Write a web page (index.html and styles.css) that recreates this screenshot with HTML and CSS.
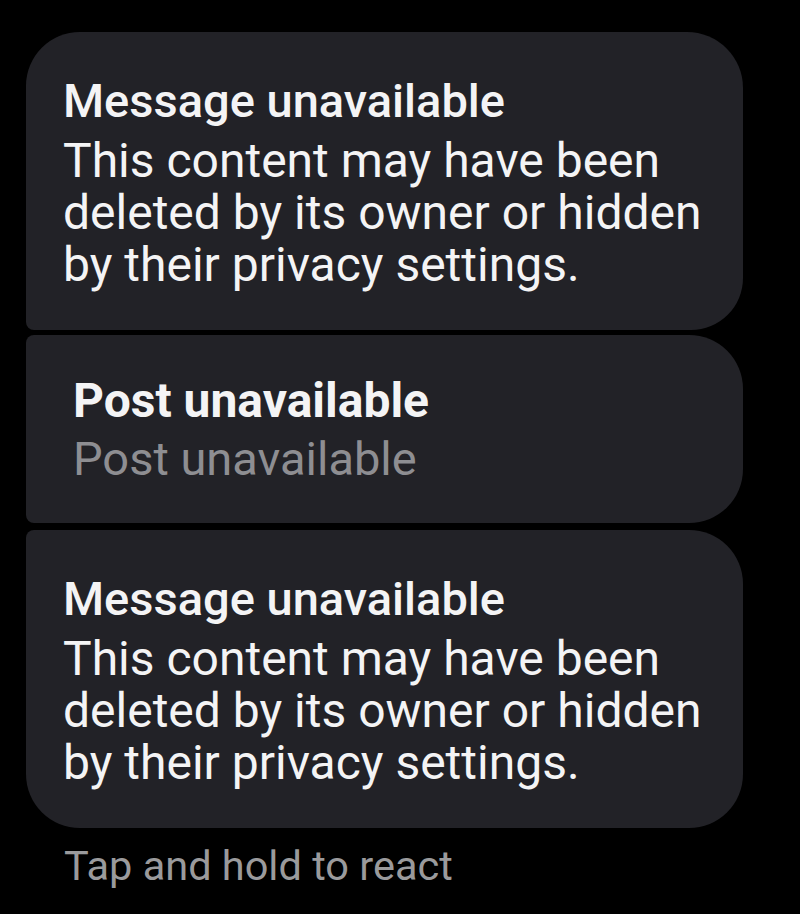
FILE: index.html
```html
<!DOCTYPE html>
<html lang="en">
<head>
<meta charset="utf-8">
<title>Messages</title>
<link rel="stylesheet" href="styles.css">
</head>
<body>
<main class="thread">
  <div class="group">
    <div class="bubble bubble-first">
      <div class="bubble-title">Message unavailable</div>
      <div class="bubble-text">This content may have been deleted by its owner or hidden by their privacy settings.</div>
    </div>
    <div class="bubble bubble-middle bubble-post">
      <div class="bubble-title bubble-title-bold">Post unavailable</div>
      <div class="bubble-text bubble-text-muted">Post unavailable</div>
    </div>
    <div class="bubble bubble-last">
      <div class="bubble-title">Message unavailable</div>
      <div class="bubble-text">This content may have been deleted by its owner or hidden by their privacy settings.</div>
    </div>
  </div>
  <div class="hint">Tap and hold to react</div>
</main>
</body>
</html>
```

FILE: styles.css
```css
html, body {
  margin: 0;
  padding: 0;
  background: #000000;
}

body {
  font-family: Roboto, "Noto Sans", "Liberation Sans", sans-serif;
  color: #f4f4f5;
  width: 800px;
  height: 914px;
  overflow: hidden;
}

.thread {
  padding: 32px 0 0 26px;
}

.group {
  display: flex;
  flex-direction: column;
  gap: 5px;
}

.bubble {
  width: 717px;
  box-sizing: border-box;
  background: #222227;
  padding: 43px 12px 39px 37px;
}

.bubble-first {
  border-radius: 54px 56px 52px 8px;
}

.bubble-middle {
  border-radius: 8px 54px 54px 8px;
}

.bubble-last {
  border-radius: 8px 54px 54px 54px;
  margin-top: 2px;
}

.bubble-post {
  padding: 40px 12px 38px 47px;
}

.bubble-title {
  font-size: 47px;
  font-weight: 500;
  line-height: 52px;
  color: #f4f4f5;
  margin-bottom: 8px;
}

.bubble-title-bold {
  font-size: 48px;
  font-weight: 700;
  margin-bottom: 6px;
}

.bubble-text {
  font-size: 48px;
  font-weight: 400;
  line-height: 52px;
  color: #f4f4f5;
}

.bubble-text-muted {
  font-size: 47px;
  color: #8e8e92;
}

.hint {
  margin: 14px 0 0 38px;
  font-size: 41.5px;
  line-height: 48px;
  color: #9a9a9c;
}
```
